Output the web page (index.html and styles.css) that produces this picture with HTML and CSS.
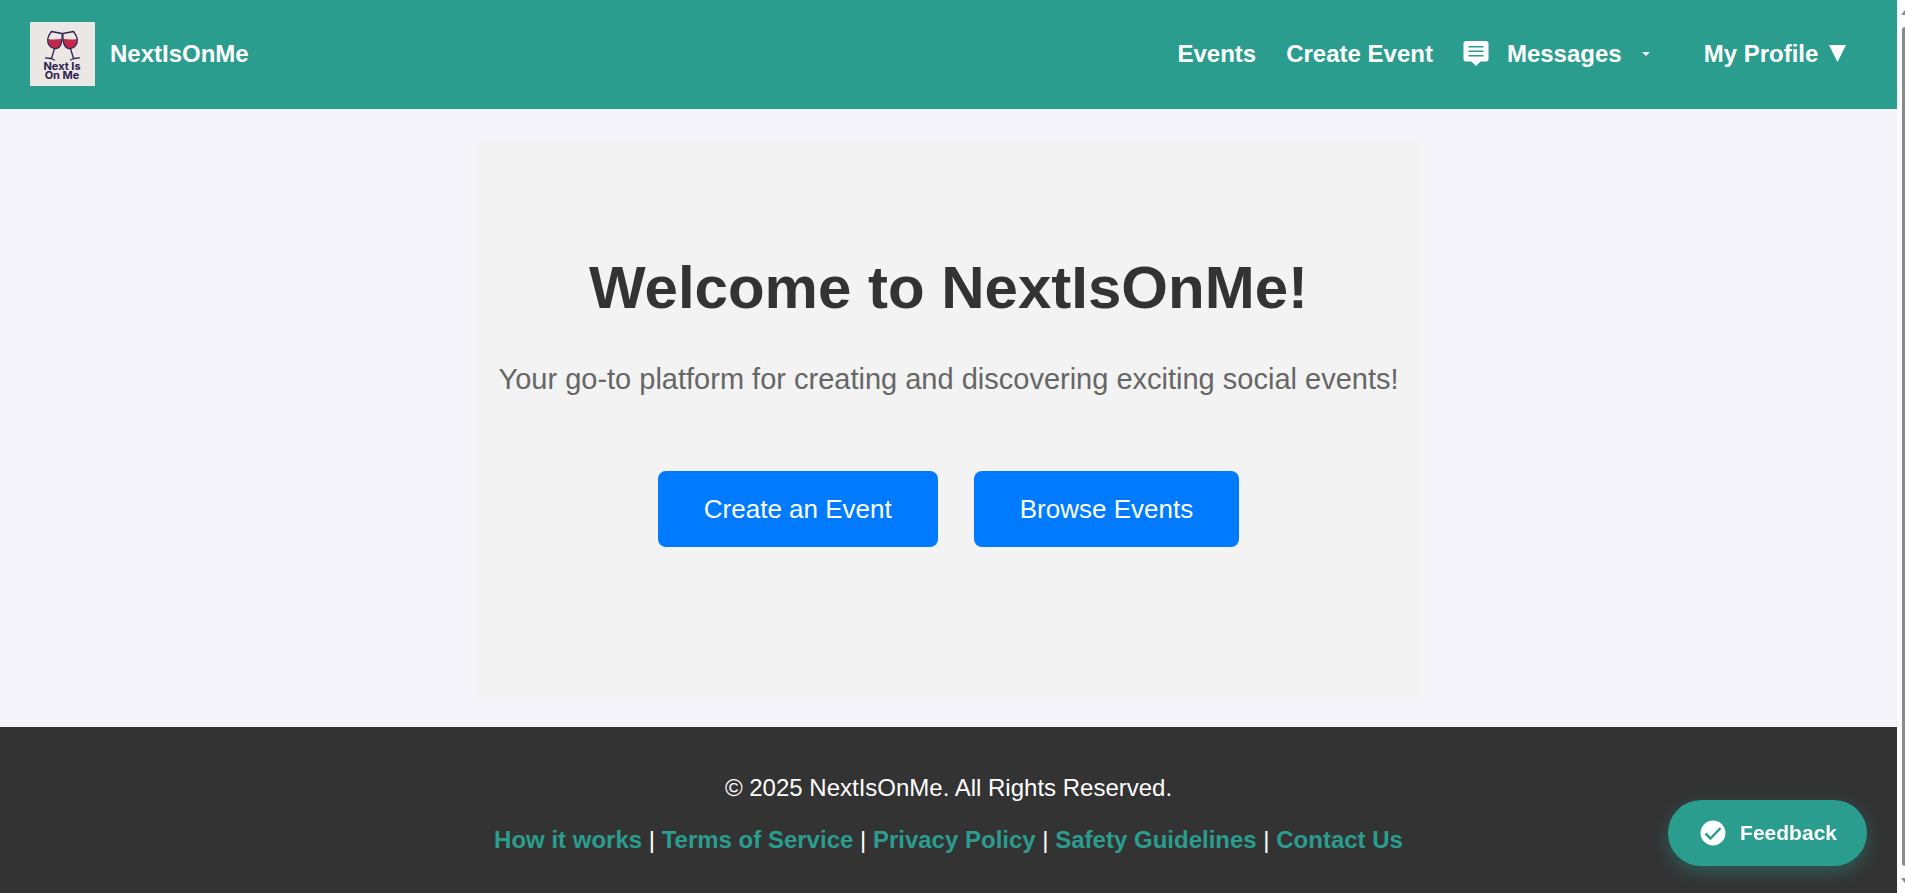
FILE: index.html
```html
<!DOCTYPE html>
<html lang="en">
<head>
<meta charset="utf-8">
<title>NextIsOnMe</title>
<link rel="stylesheet" href="styles.css">
</head>
<body>
<div class="page">
  <header class="header">
    <a class="brand" href="#">
      <svg class="logo" viewBox="0 0 65 64" role="img" aria-label="Next Is On Me">
        <rect width="65" height="64" fill="#eae7e5"/>
        <g id="glass">
          <path d="M18 17c4 .8 9 .5 13.500 0 .5 4.500-1.500 8.800-5.500 9.300-4.500.5-8-4-8-9.300z" fill="#c42847"/>
          <path d="M21.500 9.500l10.500 2c.3 6-.5 14.300-6 15.100-5.500.7-8.800-4.600-8.300-9.600.4-3 2-5.200 3.800-7.500zM24.500 26.500l-3 10M15.500 35.800l5.500.7 3.500 1.500" fill="none" stroke="#30224f" stroke-width="1.300" stroke-linecap="round" stroke-linejoin="round"/>
        </g>
        <use href="#glass" transform="translate(65 0) scale(-1 1)"/>
        <text class="logo-text" x="32" y="48" text-anchor="middle">Next Is</text>
        <text class="logo-text" x="32" y="57" text-anchor="middle">On Me</text>
      </svg>
      <span>NextIsOnMe</span>
    </a>
    <nav class="nav">
      <a href="#">Events</a>
      <a href="#">Create Event</a>
      <a class="messages" href="#">
        <svg class="messages-icon" viewBox="0 0 26 26" aria-hidden="true">
          <path d="M3 0h20a2.500 2.500 0 0 1 2.500 2.500v15.500a2.500 2.500 0 0 1-2.500 2.500h-5.500L13 25l-4.500-4.500H3A2.500 2.500 0 0 1 .5 18V2.500A2.500 2.500 0 0 1 3 0z" fill="#fff"/>
          <path d="M5.500 5.800h15M5.500 10.300h15M5.500 14.700h15" stroke="#2a9d8f" stroke-width="1.600"/>
        </svg>
        <span>Messages</span>
        <svg class="caret" viewBox="0 0 8 4" aria-hidden="true"><path d="M0 0h8L4 4z" fill="#fff"/></svg>
      </a>
      <button class="profile" type="button">My Profile <svg class="profile-arrow" viewBox="0 0 17 17" aria-hidden="true"><path d="M0 0h17L8.500 17z" fill="#fff"/></svg></button>
    </nav>
  </header>
  <main class="main">
    <section class="hero">
      <h1 class="title">Welcome to NextIsOnMe!</h1>
      <p class="tagline">Your go-to platform for creating and discovering exciting social events!</p>
      <div class="actions">
        <a class="action" href="#">Create an Event</a>
        <a class="action" href="#">Browse Events</a>
      </div>
    </section>
  </main>
  <footer class="footer">
    <p class="footer-line">© 2025 NextIsOnMe. All Rights Reserved.</p>
    <p class="footer-line"><a href="#">How it works</a> | <a href="#">Terms of Service</a> | <a href="#">Privacy Policy</a> | <a href="#">Safety Guidelines</a> | <a href="#">Contact Us</a></p>
  </footer>
</div>
<div class="scrollbar" aria-hidden="true">
  <span class="arrow-up"></span>
  <span class="thumb"></span>
  <span class="arrow-down"></span>
</div>
<button class="feedback" type="button">
  <svg class="feedback-icon" viewBox="0 0 26 26" aria-hidden="true">
    <circle cx="13" cy="13" r="12.500" fill="#fff"/>
    <path d="M5.500 13.500l5 5L20.500 8" fill="none" stroke="#2a9d8f" stroke-width="2.500"/>
  </svg>
  <span>Feedback</span>
</button>
</body>
</html>
```
FILE: styles.css
```css
* {
  box-sizing: border-box;
}

body {
  margin: 0;
  display: flex;
  min-height: 100vh;
  background: #f4f4fa;
  color: #333;
  font-family: "Liberation Sans", Arial, sans-serif;
  font-size: 24px;
  line-height: 28px;
}

a {
  color: inherit;
  text-decoration: none;
}

.page {
  flex: 1;
  display: flex;
  flex-direction: column;
}

.header {
  display: flex;
  justify-content: space-between;
  align-items: center;
  padding: 22px 51px 23px 30px;
  background: #2a9d8f;
  color: #fff;
  font-weight: bold;
}

.brand {
  display: flex;
  align-items: center;
  gap: 15px;
}

.logo {
  display: block;
  width: 65px;
  height: 64px;
}

.logo-text {
  fill: #30224f;
  font: 700 11px Inter, sans-serif;
}

.nav {
  display: flex;
  align-items: center;
  gap: 30px;
}

.messages {
  display: flex;
  align-items: center;
}

.messages-icon {
  width: 26px;
  height: 26px;
  margin-right: 18px;
}

.caret {
  width: 8px;
  height: 4px;
  margin: 0 24px 0 20px;
}

.profile {
  padding: 0;
  border: 0;
  background: none;
  color: inherit;
  font: inherit;
}

.profile-arrow {
  width: 17px;
  height: 17px;
  margin-left: 4px;
}

.main {
  flex: 1;
  display: flex;
  justify-content: center;
  padding: 30px;
}

.hero {
  display: flex;
  flex-direction: column;
  align-items: center;
  width: 948px;
  max-width: 100%;
  padding: 114px 20px;
  background: #f3f3f3;
  border-radius: 4px;
  text-align: center;
}

.title {
  margin: 0 0 39px;
  color: #333;
  font-size: 60px;
  line-height: 70px;
}

.tagline {
  margin: 0 0 75px;
  color: #666;
  font-size: 29px;
  line-height: 34px;
}

.actions {
  display: flex;
  gap: 36px;
}

.action {
  padding: 23px 46px;
  border-radius: 8px;
  background: #007bff;
  color: #fff;
  font-size: 26px;
  line-height: 30px;
}

.footer {
  padding: 47px 30px 39px;
  background: #333;
  color: #fff;
  text-align: center;
}

.footer-line {
  margin: 0 0 24px;
}

.footer-line:last-child {
  margin: 0;
}

.footer-line a {
  color: #2a9d8f;
  font-weight: bold;
}

.scrollbar {
  width: 8px;
  display: flex;
  flex-direction: column;
  align-items: flex-end;
  gap: 12px;
  padding: 10px 0;
  background: #fcfcfc;
  overflow: hidden;
}

.thumb {
  flex: 1;
  width: 3px;
  border-radius: 3px 0 0 3px;
  background: #8b8b8b;
}

.arrow-up,
.arrow-down {
  width: 4px;
  height: 5px;
  background: #8b8b8b;
}

.arrow-up {
  clip-path: polygon(100% 0, 100% 100%, 0 100%);
}

.arrow-down {
  clip-path: polygon(0 0, 100% 0, 100% 100%);
}

.feedback {
  position: fixed;
  right: 38px;
  bottom: 27px;
  display: flex;
  align-items: center;
  gap: 14px;
  padding: 20px 30px 20px 32px;
  border: 0;
  border-radius: 33px;
  background: #2a9d8f;
  box-shadow: 0 6px 18px rgba(42, 157, 143, 0.4);
  color: #fff;
  font: bold 21px/26px "Liberation Sans", Arial, sans-serif;
}

.feedback-icon {
  width: 26px;
  height: 26px;
}
```
